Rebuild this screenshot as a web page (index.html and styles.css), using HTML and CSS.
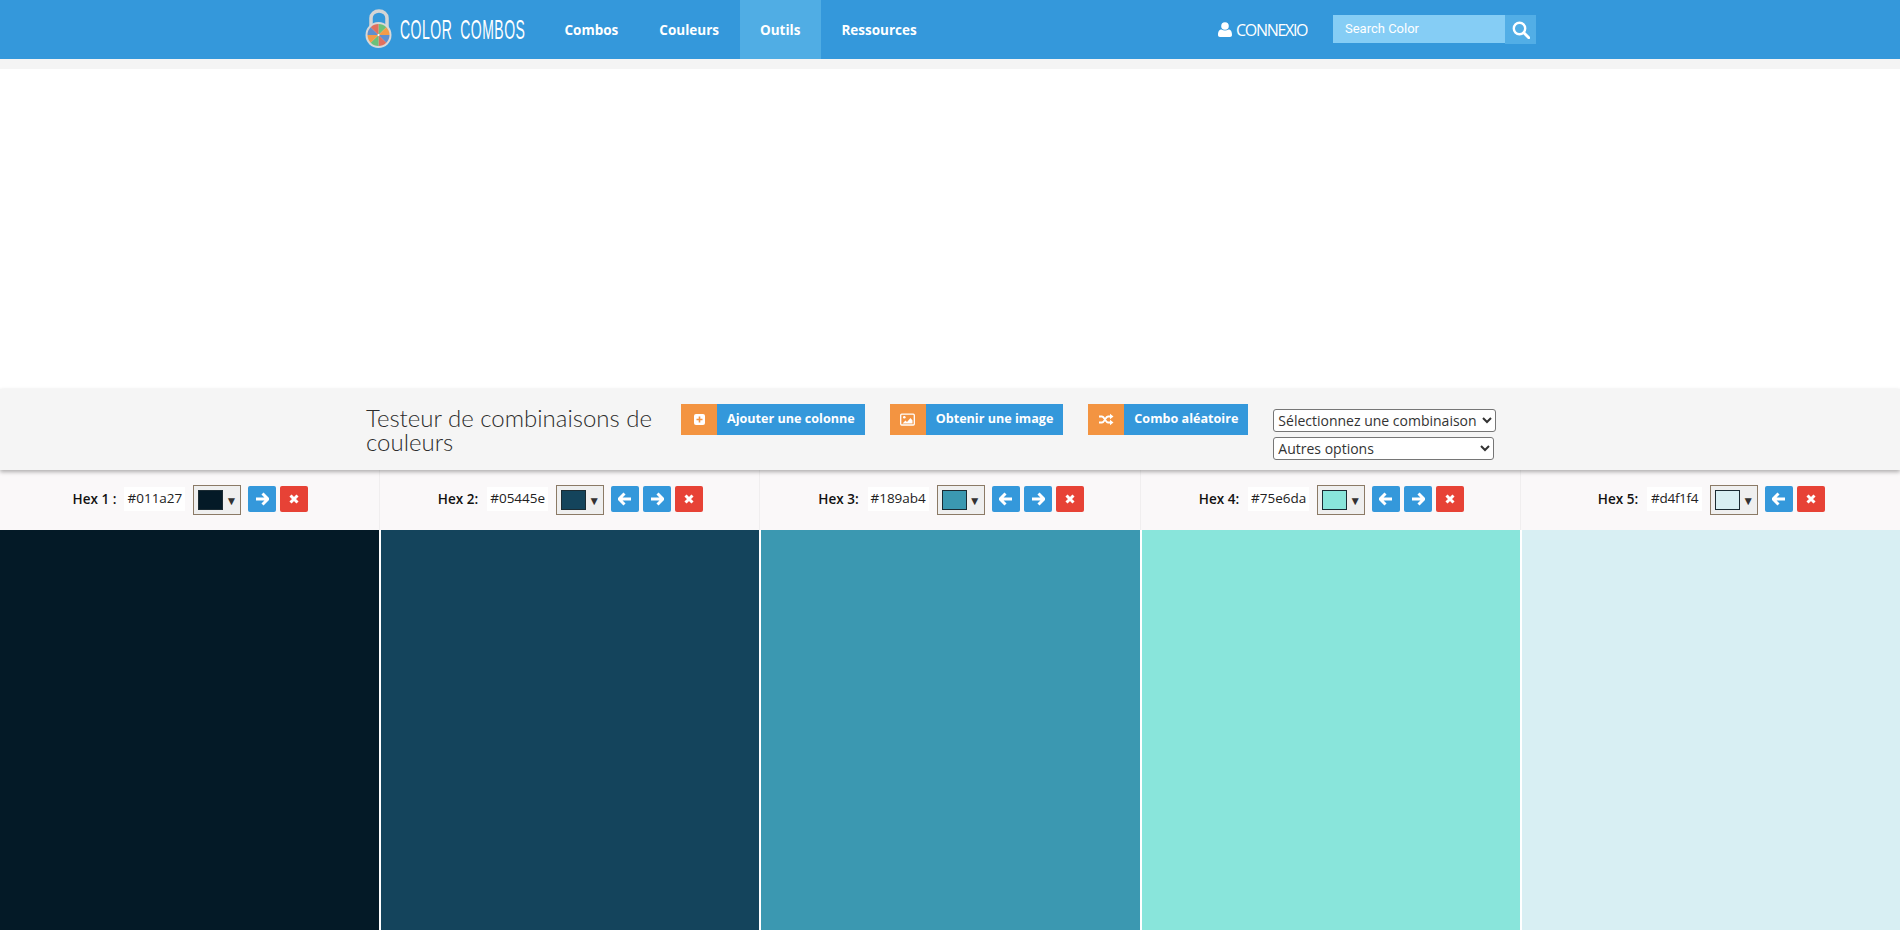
FILE: index.html
```html
<!DOCTYPE html>
<html lang="fr">
<head>
  <meta charset="UTF-8">
  <title>Testeur de combinaisons de couleurs</title>
  <link rel="stylesheet" href="styles.css">
</head>
<body>

  <header class="topbar">
    <div class="container topbar-inner">
      <a class="logo" href="#">
        <svg class="logo-lock" width="28" height="40" viewBox="0 0 28 40">
          <path d="M6 18V9a8 7 0 0 1 16 0v9" fill="none" stroke="#d5d5d5" stroke-width="3.5"/>
          <circle cx="13.5" cy="26" r="13" fill="#d8d8d8"/>
          <path d="M13.5 26V15a11 11 0 0 1 7.8 3.2z" fill="#6cc17a"/>
          <path d="M13.5 26l7.8-7.8A11 11 0 0 1 24.5 26z" fill="#f39c47"/>
          <path d="M13.5 26h11a11 11 0 0 1-3.2 7.8z" fill="#5f8fce"/>
          <path d="M13.5 26l7.8 7.8A11 11 0 0 1 13.5 37z" fill="#e0705f"/>
          <path d="M13.5 26v11a11 11 0 0 1-7.8-3.2z" fill="#6cc17a"/>
          <path d="M13.5 26l-7.8 7.8A11 11 0 0 1 2.5 26z" fill="#f39c47"/>
          <path d="M13.5 26h-11a11 11 0 0 1 3.2-7.8z" fill="#5f8fce"/>
          <path d="M13.5 26l-7.8-7.8A11 11 0 0 1 13.5 15z" fill="#e0705f"/>
          <circle cx="13.5" cy="26" r="1" fill="#fff"/>
        </svg>
        <span class="logo-text">COLOR COMBOS</span>
      </a>
      <nav class="mainnav">
        <a href="#">Combos</a>
        <a href="#">Couleurs</a>
        <a class="active" href="#">Outils</a>
        <a href="#">Ressources</a>
      </nav>
      <a class="login" href="#">
        <svg width="14" height="15" viewBox="0 0 14 15">
          <circle cx="7" cy="4" r="3.8" fill="#fff"/>
          <path d="M0 13c0-4 1.500-5.500 3.500-5.500 1 .7 2.200 1.100 3.500 1.100s2.500-.4 3.500-1.100C12.500 7.500 14 9 14 13c0 1.200-.8 2-2 2H2c-1.200 0-2-.8-2-2z" fill="#fff"/>
        </svg>
        <span class="login-text">CONNEXIO</span>
      </a>
      <form class="search">
        <span class="search-field">Search Color</span>
        <span class="search-btn">
          <svg width="18" height="18" viewBox="0 0 18 18">
            <circle cx="7.500" cy="7.500" r="5.700" fill="none" stroke="#fff" stroke-width="2.400"/>
            <path d="M11.800 11.800l5 5" stroke="#fff" stroke-width="2.800" stroke-linecap="round"/>
          </svg>
        </span>
      </form>
    </div>
  </header>

  <div class="topstrip"></div>
  <div class="adspace"></div>

  <section class="toolbar">
    <div class="container toolbar-inner">
      <h1>Testeur de combinaisons de couleurs</h1>
      <a class="tool" href="#">
        <span class="tool-icon">
          <svg width="13" height="13" viewBox="0 0 13 13">
            <rect x="1" y="1" width="11" height="11" rx="2" fill="#fff"/>
            <path d="M6.500 3.500v6M3.500 6.500h6" stroke="#f39441" stroke-width="1.600"/>
          </svg>
        </span>
        <span class="tool-label">Ajouter une colonne</span>
      </a>
      <a class="tool" href="#">
        <span class="tool-icon">
          <svg width="15" height="13" viewBox="0 0 15 13">
            <rect x=".7" y="1.200" width="13.600" height="10.800" rx="1" fill="none" stroke="#fff" stroke-width="1.300"/>
            <circle cx="4.300" cy="4.300" r="1.300" fill="#fff"/>
            <path d="M2.500 10.500l3-3 1.500 1.500 3.500-4 2 2.500v3z" fill="#fff"/>
          </svg>
        </span>
        <span class="tool-label">Obtenir une image</span>
      </a>
      <a class="tool" href="#">
        <span class="tool-icon">
          <svg width="15" height="13" viewBox="0 0 15 13">
            <path d="M0 3.500h3c2.500 0 3.500 6 6 6h2.500M0 9.500h3c2.500 0 3.500-6 6-6h2.500" fill="none" stroke="#fff" stroke-width="1.800"/>
            <path d="M11 .8l3.500 2.700L11 6.200zM11 6.800l3.500 2.700-3.500 2.700z" fill="#fff"/>
          </svg>
        </span>
        <span class="tool-label">Combo aléatoire</span>
      </a>
      <div class="selects">
        <select class="combo-select"><option>Sélectionnez une combinaison</option></select>
        <select class="other-select"><option>Autres options</option></select>
      </div>
    </div>
  </section>

  <section class="tester">
    <div class="col">
      <div class="col-head">
        <label>Hex 1 :</label>
        <span class="hex hex-first">#011a27</span>
        <span class="picker"><i class="chip chip-1"></i><b>▼</b></span>
        <span class="btn btn-blue"><svg width="14" height="14" viewBox="0 0 14 14"><path class="arrow" d="M7.500 1.500L13 7l-5.500 5.500M12 7H1"/></svg></span>
        <span class="btn btn-red"><svg width="10" height="10" viewBox="0 0 10 10"><path class="cross" d="M1.500 1.500l7 7M8.500 1.500l-7 7"/></svg></span>
      </div>
      <div class="color color-1"></div>
    </div>
    <div class="col">
      <div class="col-head">
        <label>Hex 2:</label>
        <span class="hex">#05445e</span>
        <span class="picker"><i class="chip chip-2"></i><b>▼</b></span>
        <span class="btn btn-blue"><svg width="14" height="14" viewBox="0 0 14 14"><path class="arrow" d="M6.500 1.500L1 7l5.500 5.500M2 7h11"/></svg></span>
        <span class="btn btn-blue"><svg width="14" height="14" viewBox="0 0 14 14"><path class="arrow" d="M7.500 1.500L13 7l-5.500 5.500M12 7H1"/></svg></span>
        <span class="btn btn-red"><svg width="10" height="10" viewBox="0 0 10 10"><path class="cross" d="M1.500 1.500l7 7M8.500 1.500l-7 7"/></svg></span>
      </div>
      <div class="color color-2"></div>
    </div>
    <div class="col">
      <div class="col-head">
        <label>Hex 3:</label>
        <span class="hex">#189ab4</span>
        <span class="picker"><i class="chip chip-3"></i><b>▼</b></span>
        <span class="btn btn-blue"><svg width="14" height="14" viewBox="0 0 14 14"><path class="arrow" d="M6.500 1.500L1 7l5.500 5.500M2 7h11"/></svg></span>
        <span class="btn btn-blue"><svg width="14" height="14" viewBox="0 0 14 14"><path class="arrow" d="M7.500 1.500L13 7l-5.500 5.500M12 7H1"/></svg></span>
        <span class="btn btn-red"><svg width="10" height="10" viewBox="0 0 10 10"><path class="cross" d="M1.500 1.500l7 7M8.500 1.500l-7 7"/></svg></span>
      </div>
      <div class="color color-3"></div>
    </div>
    <div class="col">
      <div class="col-head">
        <label>Hex 4:</label>
        <span class="hex">#75e6da</span>
        <span class="picker"><i class="chip chip-4"></i><b>▼</b></span>
        <span class="btn btn-blue"><svg width="14" height="14" viewBox="0 0 14 14"><path class="arrow" d="M6.500 1.500L1 7l5.500 5.500M2 7h11"/></svg></span>
        <span class="btn btn-blue"><svg width="14" height="14" viewBox="0 0 14 14"><path class="arrow" d="M7.500 1.500L13 7l-5.500 5.500M12 7H1"/></svg></span>
        <span class="btn btn-red"><svg width="10" height="10" viewBox="0 0 10 10"><path class="cross" d="M1.500 1.500l7 7M8.500 1.500l-7 7"/></svg></span>
      </div>
      <div class="color color-4"></div>
    </div>
    <div class="col">
      <div class="col-head">
        <label>Hex 5:</label>
        <span class="hex hex-narrow">#d4f1f4</span>
        <span class="picker"><i class="chip chip-5"></i><b>▼</b></span>
        <span class="btn btn-blue"><svg width="14" height="14" viewBox="0 0 14 14"><path class="arrow" d="M6.500 1.500L1 7l5.500 5.500M2 7h11"/></svg></span>
        <span class="btn btn-red"><svg width="10" height="10" viewBox="0 0 10 10"><path class="cross" d="M1.500 1.500l7 7M8.500 1.500l-7 7"/></svg></span>
      </div>
      <div class="color color-5"></div>
    </div>
  </section>

</body>
</html>
```
FILE: styles.css
```css
* {
  box-sizing: border-box;
}

body {
  margin: 0;
  font-family: "Open Sans", sans-serif;
  font-size: 14px;
  background: #fff;
  color: #111;
}

a {
  text-decoration: none;
  color: inherit;
}

.container {
  width: 1170px;
  margin: 0 auto;
}

/* top bar */
.topbar {
  height: 59px;
  background: #3498db;
  color: #fff;
}

.topbar-inner {
  display: flex;
  height: 59px;
}

.logo {
  display: flex;
  align-items: center;
  width: 179px;
  overflow: hidden;
}

.logo-lock {
  flex: none;
  margin-top: -1px;
}

.logo-text {
  flex: none;
  display: inline-block;
  width: 100px;
  margin-left: 7px;
  font-family: "Liberation Sans", sans-serif;
  font-size: 28px;
  letter-spacing: 1px;
  word-spacing: 7px;
  white-space: nowrap;
  transform: scaleX(0.5);
  transform-origin: left center;
}

.mainnav {
  display: flex;
}

.mainnav a {
  padding: 0 20.500px;
  line-height: 60px;
  font-weight: 700;
  font-size: 13.500px;
}

.mainnav a.active {
  background: #50ade4;
}

.login {
  display: flex;
  align-items: center;
  gap: 4px;
  margin-left: auto;
  margin-right: 25px;
  height: 59px;
}

.login-text {
  display: block;
  width: 72px;
  overflow: hidden;
  font-size: 16px;
  letter-spacing: -1.300px;
  white-space: nowrap;
}

.search {
  display: flex;
  margin: 15px -1px 0 0;
  height: 29px;
}

.search-field {
  width: 172px;
  height: 28px;
  padding-left: 12px;
  background: #85cdf5;
  font-family: Roboto, sans-serif;
  font-size: 13px;
  line-height: 27px;
}

.search-btn {
  display: flex;
  align-items: center;
  justify-content: center;
  width: 31px;
  background: #52aee6;
}

.topstrip {
  height: 10px;
  background: #f4f4f4;
}

.adspace {
  height: 320px;
}

/* toolbar */
.toolbar {
  position: relative;
  height: 81px;
  background: #f5f5f5;
  box-shadow: 0 2px 4px rgba(0, 0, 0, 0.3);
}

.toolbar-inner {
  display: flex;
  align-items: flex-start;
  gap: 25px;
  padding-top: 15px;
}

.toolbar h1 {
  width: 291px;
  margin: 2px 0 0;
  padding-left: 1px;
  font-family: Lato, sans-serif;
  font-size: 24px;
  font-weight: 300;
  line-height: 24px;
  color: #2c2c2c;
}

.tool {
  display: flex;
  height: 31px;
  line-height: 30px;
  color: #fff;
  font-size: 12.600px;
  font-weight: 700;
  white-space: nowrap;
}

.tool-icon {
  display: flex;
  align-items: center;
  justify-content: center;
  width: 36px;
  background: #f39441;
}

.tool-label {
  padding: 0 10px;
  background: #3498db;
}

.selects {
  display: flex;
  flex-direction: column;
  gap: 5px;
  padding-top: 5px;
}

.selects select {
  height: 23px;
  font-family: "Open Sans", sans-serif;
  font-size: 14px;
  color: #333;
  background: #fff;
  border: 1px solid #767676;
  border-radius: 3px;
}

.combo-select {
  width: 223px;
}

.other-select {
  width: 221px;
}

/* colour columns */
.tester {
  display: grid;
  grid-template-columns: 380px 380px 381px 380px 379px;
}

.col-head {
  display: flex;
  align-items: center;
  justify-content: center;
  height: 60px;
  padding-left: 2px;
  background: #faf8f9;
  border-right: 1px solid #f0eeef;
}

.col:last-child .col-head {
  border-right: 0;
}

.col-head label {
  margin-bottom: 2px;
  font-weight: 600;
  font-size: 13.500px;
}

.hex {
  width: 61px;
  height: 24px;
  margin: 0 0 2px 9px;
  background: #fff;
  text-align: center;
  line-height: 23px;
  font-size: 13.500px;
  color: #222;
}

.hex-first {
  margin-left: 8px;
}

.hex-narrow {
  width: 55px;
  letter-spacing: -0.300px;
}

.picker {
  display: flex;
  align-items: center;
  gap: 2px;
  width: 48px;
  height: 30px;
  margin: 0 7px 0 8px;
  padding-left: 4px;
  background: #efefef;
  border: 1px solid #8b7a66;
}

.picker b {
  font-size: 12px;
  font-weight: 400;
  color: #333;
}

.chip {
  display: block;
  flex: none;
  width: 25px;
  height: 20px;
  border: 1px solid #1b2b33;
}

.chip-1 { background: #041a27; }
.chip-2 { background: #14445c; }
.chip-3 { background: #3b98b1; }
.chip-4 { background: #89e5db; }
.chip-5 { background: #d8eff3; }

.btn {
  display: flex;
  align-items: center;
  justify-content: center;
  width: 28px;
  height: 26px;
  margin: 0 4px 2px 0;
  border-radius: 2px;
}

.btn:last-child {
  margin-right: 0;
}

.btn-blue {
  background: #3498db;
}

.btn-red {
  background: #e74236;
}

.arrow {
  fill: none;
  stroke: #fff;
  stroke-width: 3;
}

.cross {
  fill: none;
  stroke: #fff;
  stroke-width: 3;
}

.color {
  height: 400px;
  border-left: 1px solid #fff;
  border-right: 1px solid #fff;
}

.col:first-child .color {
  border-left: 0;
}

.col:last-child .color {
  border-right: 0;
}

.color-1 { background: #041a27; }
.color-2 { background: #14445c; }
.color-3 { background: #3b98b1; }
.color-4 { background: #89e5db; }
.color-5 { background: #d8eff3; }
```
